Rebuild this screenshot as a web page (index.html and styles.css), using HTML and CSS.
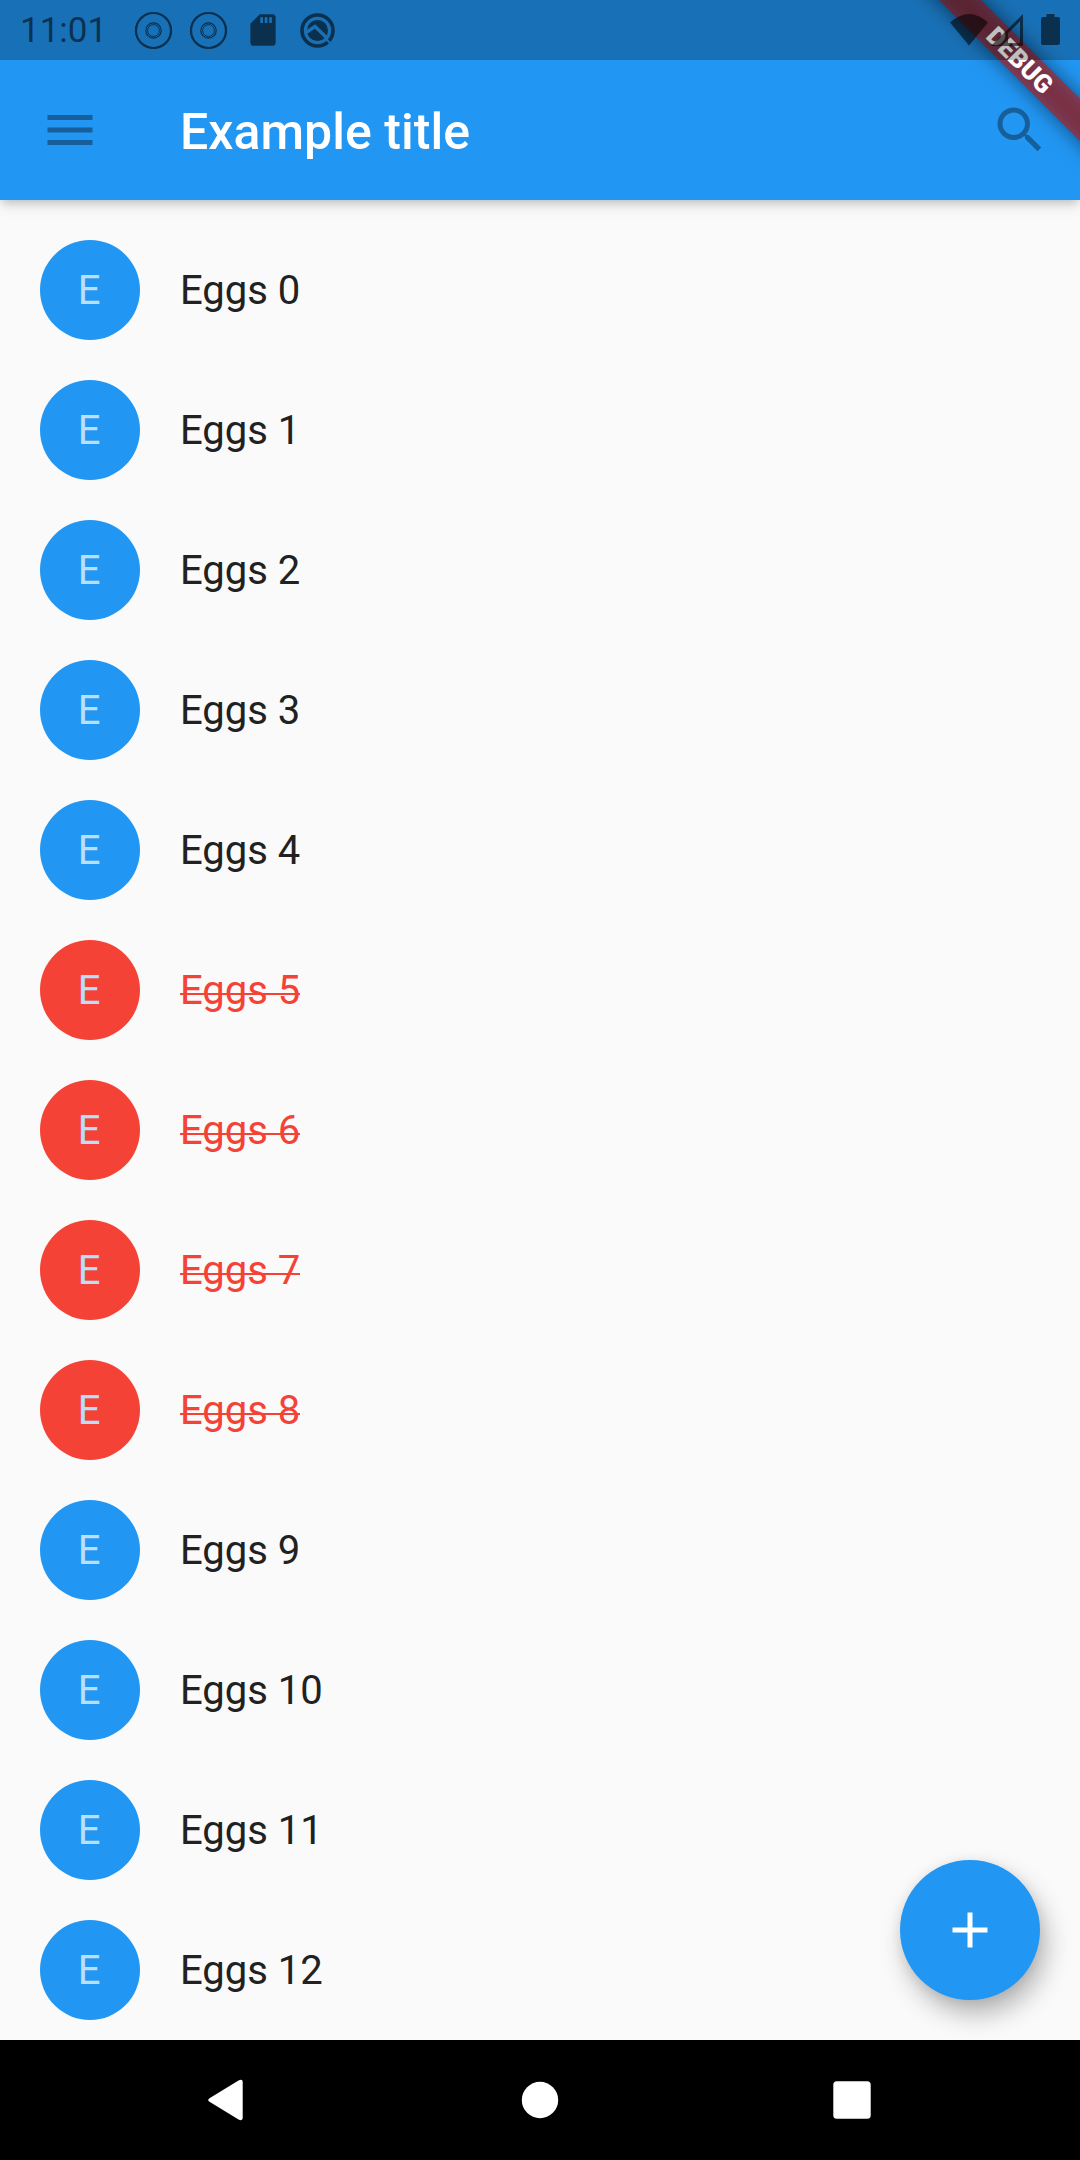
FILE: index.html
```html
<!DOCTYPE html>
<html lang="en">
<head>
<meta charset="utf-8">
<title>Example title</title>
<link rel="stylesheet" href="styles.css">
</head>
<body>
<div class="screen">
  <header class="top">
    <div class="status">
      <span class="clock">11:01</span>
      <svg class="ring" width="39" height="39" viewBox="0 0 39 39"><circle cx="19.5" cy="19.5" r="17.500" stroke-width="2.200"/><circle cx="19.500" cy="19.500" r="7.700" stroke-width="1.200"/><circle cx="19.500" cy="19.500" r="5.900" stroke-width="1"/><path d="M3.500 12.500Q-.8 19 3.500 27M35.500 12.500Q39.800 19 35.500 27" stroke-width="1"/></svg>
      <svg class="ring" width="39" height="39" viewBox="0 0 39 39"><circle cx="19.5" cy="19.5" r="17.500" stroke-width="2.200"/><circle cx="19.500" cy="19.500" r="7.700" stroke-width="1.200"/><circle cx="19.500" cy="19.500" r="5.900" stroke-width="1"/><path d="M3.500 12.500Q-.8 19 3.500 27M35.500 12.500Q39.800 19 35.500 27" stroke-width="1"/></svg>
      <svg class="sd" width="38" height="38" viewBox="0 0 24 24"><path d="M18 2h-8L4.020 8 4 20c0 1.100.9 2 2 2h12c1.100 0 2-.9 2-2V4c0-1.100-.9-2-2-2zm-6 5.500h-1.700V4H12v3.500zm2.800 0h-1.700V4h1.700v3.500zm2.800 0h-1.700V4h1.700v3.500z"/></svg>
      <svg class="find" width="37" height="37" viewBox="0 0 37 37"><circle cx="18.500" cy="18.500" r="10.500"/><path class="cut" d="M7 20.500 16 14.500 30 28"/><circle class="arc" cx="18.500" cy="18.500" r="15.500"/><path class="cut thin" d="M27 27l8 8"/></svg>
      <span class="spacer"></span>
      <svg class="wifi" width="38" height="32" viewBox="0 0 38 32"><path d="M0 8.500Q19-8.500 38 8.500L19 31.500z"/></svg>
      <svg class="cell" width="32" height="32" viewBox="0 0 32 32"><path d="M0 32 32 0v32zM17 29h12V7.200L17 19.200z" fill-rule="evenodd"/></svg>
      <svg class="battery" width="19" height="32" viewBox="0 0 19 32"><path d="M5.500 0h8v3h3.500a2 2 0 0 1 2 2v24a2 2 0 0 1-2 2H2a2 2 0 0 1-2-2V5a2 2 0 0 1 2-2h3.500z"/></svg>
    </div>
    <div class="appbar">
      <svg class="icon" viewBox="0 0 24 24"><path d="M3 18h18v-2H3v2zm0-5h18v-2H3v2zm0-7v2h18V6H3z"/></svg>
      <h1 class="title">Example title</h1>
      <svg class="icon" viewBox="0 0 24 24"><path d="M15.500 14h-.79l-.28-.27C15.410 12.590 16 11.110 16 9.500 16 5.910 13.090 3 9.500 3S3 5.910 3 9.500 5.910 16 9.500 16c1.610 0 3.090-.59 4.230-1.570l.27.28v.79l5 4.990L20.490 19l-4.990-5zm-6 0C7.010 14 5 11.990 5 9.500S7.010 5 9.500 5 14 7.010 14 9.500 11.990 14 9.500 14z"/></svg>
    </div>
  </header>
  <ul class="list">
    <li class="item"><span class="avatar">E</span><span>Eggs 0</span></li>
    <li class="item"><span class="avatar">E</span><span>Eggs 1</span></li>
    <li class="item"><span class="avatar">E</span><span>Eggs 2</span></li>
    <li class="item"><span class="avatar">E</span><span>Eggs 3</span></li>
    <li class="item"><span class="avatar">E</span><span>Eggs 4</span></li>
    <li class="item done"><span class="avatar">E</span><span class="label">Eggs 5</span></li>
    <li class="item done"><span class="avatar">E</span><span class="label">Eggs 6</span></li>
    <li class="item done"><span class="avatar">E</span><span class="label">Eggs 7</span></li>
    <li class="item done"><span class="avatar">E</span><span class="label">Eggs 8</span></li>
    <li class="item"><span class="avatar">E</span><span>Eggs 9</span></li>
    <li class="item"><span class="avatar">E</span><span>Eggs 10</span></li>
    <li class="item"><span class="avatar">E</span><span>Eggs 11</span></li>
    <li class="item"><span class="avatar">E</span><span>Eggs 12</span></li>
  </ul>
  <nav class="nav">
    <svg width="60" height="60" viewBox="0 0 60 60"><path d="M14.500 28.200 43.500 10.500q4.200-1.800 4.200 1.500v36q0 3.300-4.200 1.500L14.500 31.800q-2.600-1.800 0-3.600z"/></svg>
    <svg width="60" height="60" viewBox="0 0 60 60"><circle cx="30" cy="30" r="18.200"/></svg>
    <svg width="60" height="60" viewBox="0 0 60 60"><rect x="11.300" y="11.300" width="37.400" height="37.400" rx="3.500"/></svg>
  </nav>
  <div class="fab"><svg class="icon" viewBox="0 0 24 24"><path d="M19 13h-6v6h-2v-6H5v-2h6V5h2v6h6v2z"/></svg></div>
  <div class="debug"><span class="ribbon">DEBUG</span></div>
</div>
</body>
</html>
```
FILE: styles.css
```css
body {
  margin: 0;
  font-family: Roboto, sans-serif;
}
.screen {
  position: relative;
  display: flex;
  flex-direction: column;
  width: 1080px;
  height: 2160px;
  overflow: hidden;
  background: #fafafa;
}
.top {
  position: relative;
  background: #2196f3;
  box-shadow: 0 4px 9px -2px rgba(0,0,0,.16), 0 7px 14px rgba(0,0,0,.08), 0 2px 10px rgba(0,0,0,.04);
}
/* The system bar tints whatever is under it, the debug ribbon included. */
.status {
  position: relative;
  z-index: 3;
  display: flex;
  align-items: center;
  box-sizing: border-box;
  height: 60px;
  padding: 0 20px;
  background: rgba(0,0,0,.25);
  fill: rgba(0,0,0,.57);
}
.clock {
  width: 114px;
  padding-top: 2px;
  font-size: 35px;
  line-height: 60px;
  color: rgba(0,0,0,.57);
}
.ring {
  margin-right: 16px;
  fill: none;
  stroke: #0b304d;
}
.sd { margin-right: 17px; }
.arc {
  fill: none;
  stroke: #0b304d;
  stroke-width: 3.600;
}
.cut {
  fill: none;
  stroke: #1a70b6;
  stroke-width: 3.400;
}
.thin { stroke-width: 2; }
.find { fill: #0b304d; }
.spacer { flex: 1; }
.wifi { margin-right: 3px; }
.cell { margin-right: 18px; }
.appbar {
  display: flex;
  align-items: center;
  height: 140px;
  padding: 0 30px 0 40px;
}
.icon {
  width: 60px;
  height: 60px;
  fill: #165f9b;
}
.title {
  flex: 1;
  margin: 0 0 0 80px;
  padding-top: 3px;
  font-size: 50px;
  font-weight: 500;
  line-height: 60px;
  letter-spacing: .05px;
  color: #fff;
}
.list {
  flex: 1;
  min-height: 0;
  margin: 0;
  padding: 20px 0 0;
  list-style: none;
}
.item {
  display: flex;
  align-items: center;
  gap: 40px;
  height: 140px;
  padding-left: 40px;
  font-size: 40px;
  color: #212121;
}
.avatar {
  display: flex;
  align-items: center;
  justify-content: center;
  box-sizing: border-box;
  width: 100px;
  height: 100px;
  padding-right: 2px;
  border-radius: 50%;
  background: #2196f3;
  color: #bbdefb;
}
.done { color: #f44336; }
.done .avatar { background: #f44336; }
.label { position: relative; }
.label::after {
  content: "";
  position: absolute;
  left: 0;
  right: 0;
  top: calc(50% + 3px);
  height: 2px;
  background: #f44336;
}
.nav {
  display: flex;
  align-items: center;
  justify-content: space-between;
  height: 120px;
  padding: 0 198px 0 195px;
  background: #000;
  fill: #fff;
}
.nav svg:nth-child(2) { margin-left: 3px; }
.fab {
  position: absolute;
  left: 900px;
  top: 1860px;
  display: flex;
  align-items: center;
  justify-content: center;
  width: 140px;
  height: 140px;
  border-radius: 50%;
  background: #2196f3;
  box-shadow: 6px 14px 26px rgba(0,0,0,.28), 0 2px 12px rgba(0,0,0,.08);
}
.fab .icon { fill: #fff; }
.debug {
  position: absolute;
  z-index: 2;
  top: 0;
  right: 0;
  width: 240px;
  height: 198px;
  overflow: hidden;
}
.ribbon {
  position: absolute;
  left: 20px;
  top: 45px;
  width: 320px;
  height: 30px;
  transform: rotate(45deg);
  color: #fff;
  font-size: 25.500px;
  font-weight: 900;
  line-height: 31px;
  text-align: center;
}
.ribbon::before,
.ribbon::after {
  content: "";
  position: absolute;
  inset: 0;
  z-index: -1;
}
.ribbon::before {
  background: rgba(0,0,0,.5);
  filter: blur(10px);
}
.ribbon::after { background: rgba(183,28,28,.627); }
```
